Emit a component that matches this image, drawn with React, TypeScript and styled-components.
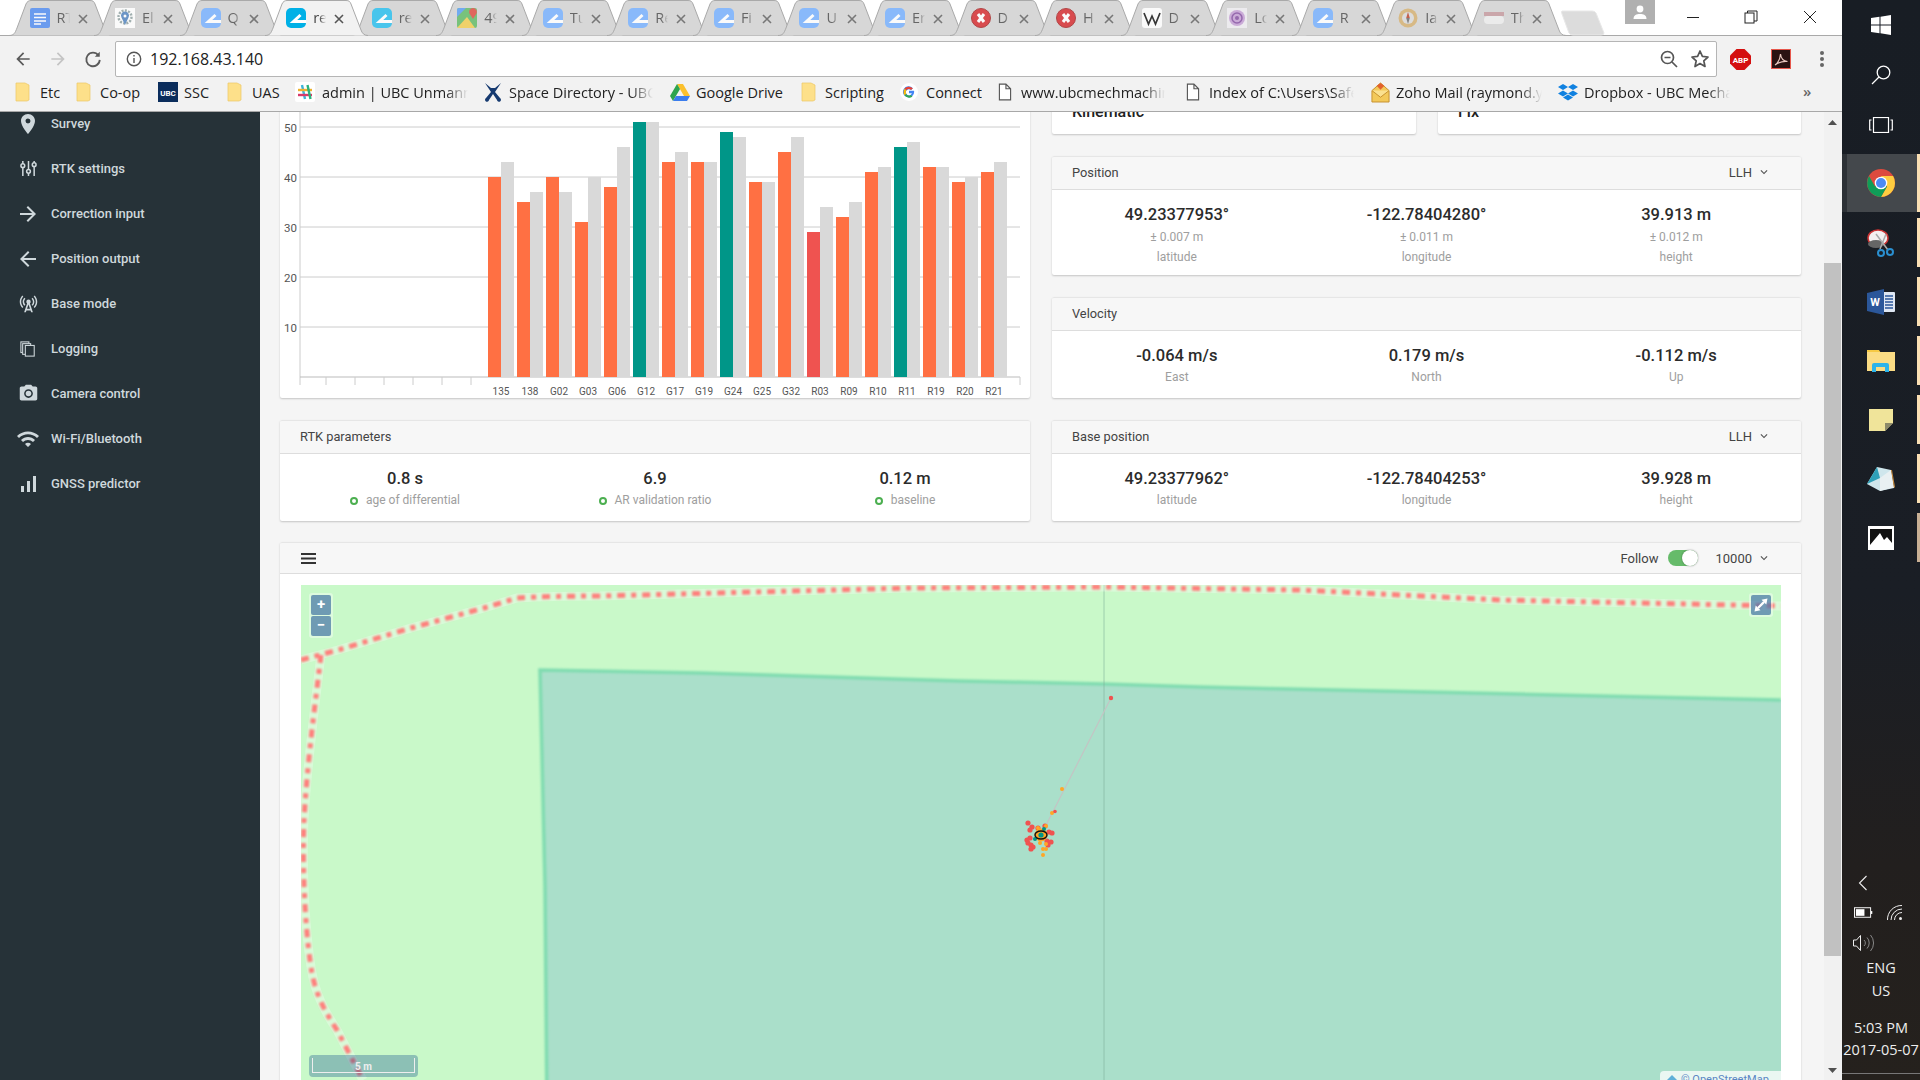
import React from 'react';
import styled, { createGlobalStyle } from 'styled-components';
import { MdPlace, MdArrowForward, MdArrowBack, MdCellTower, MdPhotoCamera, MdWifi, MdSignalCellularAlt, MdKeyboardArrowDown } from 'react-icons/md';

const Global = createGlobalStyle`
  html, body { margin: 0; padding: 0; width: 1920px; height: 1080px; overflow: hidden; background: #fff; }
  * { box-sizing: border-box; }
  #root { width: 1920px; height: 1080px; }
`;

const Screen = styled.div`
  display: flex; width: 1920px; height: 1080px; overflow: hidden;
  font-family: Roboto, "Liberation Sans", sans-serif;
`;
const Browser = styled.div`
  flex: 0 0 1842px; display: flex; flex-direction: column; min-width: 0;
`;

/* ---------- Tab strip ---------- */
const TabStrip = styled.div`
  flex: 0 0 35px; display: flex; align-items: stretch; padding-left: 9.5px; background: #fff; position: relative;
  border-bottom: 1px solid #a9a9a9;
`;
const TabItem = styled.div<{ $active?: boolean }>`
  flex: 0 0 85.55px; position: relative; display: flex; align-items: center; padding-left: 20px; height: 35px;
  z-index: ${(p) => (p.$active ? 2 : 1)};
`;
const TabShape = styled.svg`
  position: absolute; left: -1px; top: 0; width: 106px; height: 36px; overflow: visible;
`;
const TabFav = styled.span<{ $active?: boolean }>`
  position: relative; width: 20px; height: 20px; flex: 0 0 20px; display: block;
  opacity: ${(p) => (p.$active ? 1 : 0.88)};
`;
const TabTitle = styled.span<{ $active?: boolean }>`
  position: relative; width: 13px; margin-left: 7px; overflow: hidden; white-space: nowrap;
  font: 14.5px "Open Sans", sans-serif; color: ${(p) => (p.$active ? '#444' : '#666')};
  -webkit-mask-image: linear-gradient(90deg, #000 50%, transparent);
  mask-image: linear-gradient(90deg, #000 50%, transparent);
`;
const TabClose = styled.svg<{ $active?: boolean }>`
  position: relative; margin-left: 8px; width: 10px; height: 10px; margin-top: 3px; stroke: ${(p) => (p.$active ? '#555' : '#777')}; stroke-width: 1.6; flex: 0 0 10px;
`;
const NewTab = styled.svg`
  position: absolute; left: 1561px; top: 10px; width: 44px; height: 27px;
`;
const Avatar = styled.div`
  position: absolute; left: 1625px; top: 0; width: 30px; height: 24px; background: #b0b0b0;
  display: flex; align-items: center; justify-content: center;
`;
const WinBtn = styled.svg<{ $x: number }>`
  position: absolute; left: ${(p) => p.$x}px; top: 10px; width: 14px; height: 14px; stroke: #222; fill: none; stroke-width: 1;
`;

/* ---------- Toolbar ---------- */
const Toolbar = styled.div`
  flex: 0 0 41px; background: #f2f2f2; display: flex; align-items: flex-start; padding-top: 5px;
`;
const NavIcon = styled.span<{ $w: number }>`
  flex: 0 0 ${(p) => p.$w}px; height: 36px; display: flex; align-items: center; justify-content: center;
`;
const Omnibox = styled.div`
  flex: 0 0 1602px; height: 36px; background: #fff; border: 1px solid #b5b5b5; border-radius: 2px;
  display: flex; align-items: center; padding: 0 6px 0 10px;
`;
const UrlText = styled.span`
  font: 16px "Open Sans", sans-serif; color: #222; margin-left: 8px; flex: 1;
`;
const OmniIcon = styled.svg`
  width: 20px; height: 20px; fill: none; stroke: #555; stroke-width: 1.7;
  & + & { margin-left: 11px; }
`;
const ExtGroup = styled.div`
  display: flex; align-items: center; height: 36px; padding-left: 13px; gap: 20px;
`;

/* ---------- Bookmarks ---------- */
const BookmarkBar = styled.div`
  flex: 0 0 35px; background: #f2f2f2; border-bottom: 1px solid #a8a8a8; display: flex; align-items: center; padding: 0 0 4px 15px; position: relative;
`;
const Bookmark = styled.div<{ $w: number }>`
  flex: 0 0 ${(p) => p.$w}px; display: flex; align-items: center; min-width: 0;
`;
const BookmarkIcon = styled.span<{ $w: number; $gap: number }>`
  flex: 0 0 ${(p) => p.$w}px; margin-right: ${(p) => p.$gap}px; display: flex; height: 20px; align-items: center; justify-content: center;
`;
const BookmarkLabel = styled.span<{ $max: number; $fade?: boolean }>`
  font: 14.5px "Open Sans", sans-serif; color: #222; white-space: nowrap; overflow: hidden; max-width: ${(p) => p.$max}px;
  ${(p) => (p.$fade ? '-webkit-mask-image: linear-gradient(90deg,#000 85%,transparent); mask-image: linear-gradient(90deg,#000 85%,transparent);' : '')}
`;
const Overflow = styled.span`
  position: absolute; left: 1803px; top: 4px; font: 600 15px "Open Sans", sans-serif; color: #666;
`;

/* ---------- App body ---------- */
const Body = styled.div`
  flex: 1; display: flex; min-height: 0; overflow: hidden;
`;
const Sidebar = styled.nav`
  flex: 0 0 260px; background: #263238; overflow: hidden;
`;
const SideList = styled.div`
  margin-top: -11px;
`;
const SideItem = styled.div`
  height: 45px; display: flex; align-items: center; padding-left: 19px; gap: 14px; color: #cfd8dc;
  font: 500 13px Roboto, sans-serif;
`;
const SideIcon = styled.span`
  flex: 0 0 18px; width: 18px; height: 18px; display: flex; align-items: center; justify-content: center; font-size: 24px;
  & > svg { flex: none; }
`;
const Main = styled.main`
  flex: 1; background: #f5f5f5; overflow: hidden; padding: 0 23px 0 20px; min-width: 0;
`;
const Content = styled.div`
  margin-top: -20px; display: flex; flex-direction: column; gap: 21px;
`;
const Columns = styled.div`
  display: grid; grid-template-columns: 750px 749px; column-gap: 22px;
`;
const Column = styled.div`
  display: flex; flex-direction: column; gap: 22px;
`;
const Card = styled.section`
  background: #fff; border-radius: 2px; box-shadow: 0 1px 2px rgba(0,0,0,.2);
`;
const ChartCard = styled(Card)`
  height: 306px; overflow: hidden;
`;
const ChartSvg = styled.svg`
  display: block; width: 750px; height: 306px;
`;
const SmallRow = styled.div`
  display: grid; grid-template-columns: 364px 363px; column-gap: 22px;
`;
const SmallCard = styled(Card)`
  height: 42px; padding: 10px 0 0 20px; font: 500 16px Roboto, sans-serif; color: #212121;
`;
const CardHeader = styled.header`
  height: 34px; background: #f7f7f7; border-bottom: 1px solid #ddd; border-top: 1px solid #e6e6e6; border-radius: 2px 2px 0 0;
  display: flex; align-items: center; justify-content: space-between; padding: 0 30px 1px 20px;
  font: 12.8px Roboto, sans-serif; color: #444;
`;
const Unit = styled.span`
  display: flex; align-items: center; gap: 5px; font: 13px Roboto, sans-serif; color: #444; margin-top: -1px;
`;
const Stats = styled.div`
  display: grid; grid-template-columns: repeat(3, 1fr);
`;
const PosStats = styled(Stats)`
  height: 85px; padding-top: 15px;
`;
const PlainStats = styled(Stats)`
  height: 67px; padding-top: 15px;
`;
const Stat = styled.div`
  display: flex; flex-direction: column; align-items: center; text-align: center;
`;
const Value = styled.div`
  font: 500 16.5px/20px Roboto, sans-serif; color: #2b2b2b; margin-bottom: 4px;
`;
const SubValue = styled.div`
  font: 12px/15px Roboto, sans-serif; color: #9e9e9e; margin: 1px 0 5px;
`;
const Label = styled.div`
  font: 12px/15px Roboto, sans-serif; color: #9e9e9e; display: flex; align-items: center; gap: 8px;
`;
const Dot = styled.span`
  width: 8px; height: 8px; border: 2px solid #4caf50; border-radius: 50%; display: block;
`;
const MapCard = styled(Card)`
  height: 700px;
`;
const MapHeader = styled(CardHeader)`
  height: 32px; padding: 0 30px 0 21px;
`;
const Burger = styled.svg`
  width: 15px; height: 11px; fill: #333;
`;
const MapTools = styled.div`
  display: flex; align-items: center; font: 13px Roboto, sans-serif; color: #444;
`;
const Toggle = styled.span`
  width: 30px; height: 16px; margin: 0 17px 0 10px; border-radius: 8px; background: #66bb6a; position: relative; display: block;
  &::after { content: ""; position: absolute; right: 0; top: 0; width: 16px; height: 16px; border-radius: 50%; background: #fff; box-shadow: 0 0 2px rgba(0,0,0,.4); }
`;
const MapCount = styled.span`
  display: flex; align-items: center; gap: 5px;
`;
const MapWrap = styled.div`
  margin: 11px 20px 0 21px; height: 640px; position: relative; background: #c9f9c9; overflow: hidden;
`;
const MapSvg = styled.svg`
  display: block; width: 1480px; height: 640px;
`;
const ZoomBox = styled.div`
  position: absolute; left: 8px; top: 8px; padding: 2px; background: rgba(255,255,255,.4); border-radius: 3px;
  display: flex; flex-direction: column; gap: 1px;
`;
const MapBtn = styled.div`
  width: 20px; height: 20px; background: rgba(0,60,136,.5); color: #fff; font: 700 15px/19px Roboto, sans-serif; text-align: center; border-radius: 2px;
`;
const FullBox = styled.div`
  position: absolute; left: 1448px; top: 8px; padding: 2px; background: rgba(255,255,255,.4); border-radius: 3px;
`;
const ScaleBar = styled.div`
  position: absolute; left: 8px; top: 470px; width: 109px; height: 22px; background: rgba(0,60,136,.3); border-radius: 4px; padding: 3px;
`;
const ScaleInner = styled.div`
  height: 15px; border: 1px solid #eee; border-top: 0; text-align: center; color: #eee; font: 700 10px/17px Roboto, sans-serif;
`;
const Attribution = styled.div`
  position: absolute; left: 1359px; top: 486px; width: 121px; height: 30px; background: rgba(255,255,255,.75); border-radius: 4px 0 0 0;
  font: 11px/18px Roboto, sans-serif; color: #5b86c4; padding-left: 7px; white-space: nowrap; overflow: hidden;
  display: flex; align-items: flex-start; gap: 4px;
`;
const Scrollbar = styled.div`
  flex: 0 0 18px; background: #f1f1f1; position: relative;
`;
const ScrollThumb = styled.div`
  position: absolute; left: 0; right: 1px; top: 151px; height: 693px; background: #c1c1c1;
`;
const ScrollArrow = styled.svg<{ $top: number }>`
  position: absolute; left: 4px; top: ${(p) => p.$top}px; width: 9px; height: 5px; fill: #505050;
`;

/* ---------- Taskbar ---------- */
const Taskbar = styled.aside`
  flex: 0 0 78px; position: relative; display: flex; flex-direction: column; align-items: stretch; color: #eee;
  background: linear-gradient(180deg, #181d24 0%, #1a1e25 55%, #221f1e 80%, #25211d 100%);
`;
const TaskBtn = styled.div<{ $h: number; $active?: boolean; $lit?: string; $mt?: number }>`
  height: ${(p) => p.$h}px; margin-top: ${(p) => p.$mt ?? 0}px; display: flex; align-items: center; justify-content: center; position: relative;
  ${(p) => (p.$active ? 'background: linear-gradient(90deg,#2d3136 0 5px,#44484c 5px);' : '')}
  ${(p) => (p.$lit ? `&::after { content:""; position:absolute; right:0; top:${p.$active ? 0 : 5}px; bottom:${p.$active ? 0 : 5}px; width:3px; background:${p.$lit}; }` : '')}
`;
const TraySpacer = styled.div`
  flex: 1;
`;
const TrayRow = styled.div<{ $h: number; $pl: number }>`
  height: ${(p) => p.$h}px; display: flex; align-items: center; padding-left: ${(p) => p.$pl}px; gap: 14px;
`;
const TrayText = styled.div<{ $lh: number }>`
  text-align: center; font: 14.5px/${(p) => p.$lh}px "Open Sans", sans-serif; color: #eee; white-space: nowrap;
`;
const TrayBlock = styled.div<{ $mt: number }>`
  margin-top: ${(p) => p.$mt}px;
`;
const TrayLine = styled.div`
  height: 1px; margin: 12px 0 6px; background: #777;
`;

/* ---------- Favicons ---------- */
const EFav = ({ color }: { color: string }) => (
  <svg viewBox="0 0 20 20" width="20" height="20">
    <rect width="20" height="20" rx="5" fill={color} />
    <path d="M20 13.5H7.500L14.500 7" stroke="#fff" strokeWidth="3" fill="none" />
  </svg>
);
const DocFav = () => (
  <svg viewBox="0 0 20 20" width="20" height="20"><rect width="20" height="20" rx="2" fill="#5c93f2" /><path d="M4 6h12M4 9.500h12M4 13h12M4 16h7" stroke="#fff" strokeWidth="1.400" /></svg>
);
const GearFav = () => (
  <svg viewBox="0 0 20 20" width="20" height="20"><rect width="20" height="20" fill="#fff" /><circle cx="10" cy="9" r="6.500" fill="none" stroke="#9aa" strokeWidth="2.400" strokeDasharray="2 1.300" /><path d="M10 17L6.500 9.500a4 4 0 1 1 7 0z" fill="#5d8dc4" /><circle cx="10" cy="8" r="1.500" fill="#fff" /></svg>
);
const MapsFav = () => (
  <svg viewBox="0 0 20 20" width="20" height="20"><rect width="20" height="20" rx="2" fill="#6cc070" /><path d="M0 20L10 9l8 11z" fill="#f4d15c" /><path d="M0 9L9 0H2a2 2 0 0 0-2 2z" fill="#63a4f4" /><path d="M16 0a4 4 0 0 1 3.500 5.500L16 11l-3.500-5.500A4 4 0 0 1 16 0z" fill="#e2574c" /></svg>
);
const ErrFav = () => (
  <svg viewBox="0 0 20 20" width="20" height="20"><circle cx="10" cy="10" r="9.500" fill="#d9383c" stroke="#a33" /><path d="M7 6l6 8M13 6l-6 8" stroke="#fff" strokeWidth="3" /></svg>
);
const WikiFav = () => (
  <svg viewBox="0 0 20 20" width="20" height="20"><rect width="20" height="20" rx="3" fill="#fff" /><path d="M2 5l4.500 11L10 8l3.500 8L18 5" fill="none" stroke="#222" strokeWidth="1.700" /></svg>
);
const SpiralFav = () => (
  <svg viewBox="0 0 20 20" width="20" height="20"><rect width="20" height="20" fill="#f0eef2" /><circle cx="10" cy="10" r="8" fill="#c9a6d8" /><circle cx="10" cy="10" r="5" fill="none" stroke="#8d5aa8" strokeWidth="1.500" /><circle cx="10" cy="10" r="2" fill="#8d5aa8" /></svg>
);
const CompassFav = () => (
  <svg viewBox="0 0 20 20" width="20" height="20"><circle cx="10" cy="10" r="9.500" fill="#d8b67a" /><circle cx="10" cy="10" r="6" fill="#ddd" /><path d="M10 4l1.800 6H8.200z" fill="#c0503a" /><path d="M10 16l-1.800-6h3.600z" fill="#777" /></svg>
);
const TallyFav = () => (
  <svg viewBox="0 0 20 20" width="20" height="20"><rect y="4" width="20" height="4" fill="#c9a0a4" /><rect y="8" width="20" height="8" rx="4" fill="#eee" /></svg>
);

const blue = '#7fb6ff';
const tabs: { fav: React.ReactNode; title: string; active?: boolean }[] = [
  { fav: <DocFav />, title: 'RT' }, { fav: <GearFav />, title: 'El' }, { fav: <EFav color={blue} />, title: 'Q' },
  { fav: <EFav color="#00b0e6" />, title: 're', active: true }, { fav: <EFav color="#35c3f0" />, title: 're' }, { fav: <MapsFav />, title: '49' },
  { fav: <EFav color={blue} />, title: 'Tu' }, { fav: <EFav color={blue} />, title: 'Re' }, { fav: <EFav color={blue} />, title: 'Fi' },
  { fav: <EFav color={blue} />, title: 'U' }, { fav: <EFav color={blue} />, title: 'Er' }, { fav: <ErrFav />, title: 'D' },
  { fav: <ErrFav />, title: 'H' }, { fav: <WikiFav />, title: 'D' }, { fav: <SpiralFav />, title: 'Lo' },
  { fav: <EFav color={blue} />, title: 'R' }, { fav: <CompassFav />, title: 'Ia' }, { fav: <TallyFav />, title: 'Th' },
];

const Folder = () => (
  <svg viewBox="0 0 15 20" width="15" height="20"><path d="M1 1h9l4 2v15l-2 1H1z" fill="#fde08a" stroke="#ecc766" strokeWidth=".7" /></svg>
);
const Page = () => (
  <svg viewBox="0 0 15 20" width="14" height="20"><path d="M1.500 1.500h7l5 5v12h-12zM8.500 1.500v5h5" fill="#fff" stroke="#555" strokeWidth="1.200" /></svg>
);
const bookmarks: { w: number; iw: number; gap: number; icon: React.ReactNode; text: string; max: number; fade?: boolean }[] = [
  { w: 61, iw: 15, gap: 10, icon: <Folder />, text: 'Etc', max: 30 },
  { w: 82, iw: 15, gap: 9, icon: <Folder />, text: 'Co-op', max: 60 },
  { w: 69, iw: 20, gap: 6, icon: <svg viewBox="0 0 20 20" width="20" height="20"><rect width="20" height="20" fill="#0b2d5c" /><text x="10" y="14" fontSize="8" fontWeight="700" textAnchor="middle" fill="#fff" fontFamily="Roboto">UBC</text></svg>, text: 'SSC', max: 40 },
  { w: 68, iw: 15, gap: 10, icon: <Folder />, text: 'UAS', max: 40 },
  { w: 188, iw: 20, gap: 7, icon: <svg viewBox="0 0 20 20" width="20" height="20"><rect width="20" height="20" rx="2" fill="#fff" /><path d="M7 3l3 14" stroke="#3cb4d8" strokeWidth="2.400" /><path d="M3 8h14" stroke="#ecb22e" strokeWidth="2.400" /><path d="M3 13h14" stroke="#d63a6a" strokeWidth="2.400" /><path d="M12.500 3l3 14" stroke="#2ab27b" strokeWidth="2.400" /></svg>, text: 'admin | UBC Unmanned', max: 146, fade: true },
  { w: 187, iw: 20, gap: 6, icon: <svg viewBox="0 0 20 20" width="20" height="20"><path d="M2 1l6 9-5 6a2 2 0 1 0 3 2l4-6 4 6a2 2 0 1 0 3-2l-5-6 6-9-6 5H8z" fill="#163a70" /></svg>, text: 'Space Directory - UBC', max: 144, fade: true },
  { w: 131, iw: 20, gap: 6, icon: <svg viewBox="0 0 20 20" width="20" height="20"><path d="M7 2h6l7 12h-6z" fill="#fbc02d" /><path d="M7 2L0 14l3 5 7-12z" fill="#2da44e" /><path d="M3 19h14l3-5H6z" fill="#3b7ded" /></svg>, text: 'Google Drive', max: 100 },
  { w: 99, iw: 15, gap: 9, icon: <Folder />, text: 'Scripting', max: 70 },
  { w: 98, iw: 17, gap: 8, icon: <svg viewBox="0 0 20 20" width="18" height="18"><circle cx="10" cy="10" r="10" fill="#fff" /><path d="M15.600 8.700H10v2.800h3.200a3.400 3.400 0 1 1-.9-3.600l2-2a6.200 6.200 0 1 0 1.300 2.800z" fill="#4285f4" /><path d="M5 6.500a6.200 6.200 0 0 1 9.300-.6l-2 2A3.400 3.400 0 0 0 7 8z" fill="#ea4335" /><path d="M4 10a6 6 0 0 0 1 3.600l2-1.500a3.400 3.400 0 0 1 0-4L5 6.500A6 6 0 0 0 4 10z" fill="#fbbc05" /><path d="M5 13.600a6.200 6.200 0 0 0 8.900 1.400L12 13.400a3.400 3.400 0 0 1-5-1.300z" fill="#34a853" /></svg>, text: 'Connect', max: 70 },
  { w: 188, iw: 14, gap: 9, icon: <Page />, text: 'www.ubcmechmachineshop', max: 144, fade: true },
  { w: 185, iw: 14, gap: 9, icon: <Page />, text: 'Index of C:\\Users\\Safety', max: 145, fade: true },
  { w: 187, iw: 19, gap: 6, icon: <svg viewBox="0 0 20 22" width="19" height="21"><path d="M1 9l9-8 9 8v12H1z" fill="#f3c95a" stroke="#c58f2c" /><path d="M1 9l9 7 9-7" fill="#fbe18f" stroke="#c58f2c" /><path d="M6 4l4-3 4 3-4 4z" fill="#e2622e" /></svg>, text: 'Zoho Mail (raymond.yang', max: 146, fade: true },
  { w: 190, iw: 20, gap: 6, icon: <svg viewBox="0 0 20 20" width="20" height="20" fill="#1081e0"><path d="M5 2l5 3-5 3-5-3zM15 2l5 3-5 3-5-3zM5 8.500l5 3-5 3-5-3zM15 8.500l5 3-5 3-5-3zM5 15.500l5-3 5 3-5 3z" /></svg>, text: 'Dropbox - UBC Mechatronics', max: 146, fade: true },
];

const Sliders = () => (
  <svg viewBox="0 0 18 18" width="17" height="17" fill="none" stroke="currentColor" strokeWidth="1.600">
    <path d="M3 1v16M9 1v16M15 1v16" />
    <g fill="#263238"><circle cx="3" cy="6" r="2" /><circle cx="9" cy="12" r="2" /><circle cx="15" cy="5" r="2" /></g>
  </svg>
);
const Files = () => (
  <svg viewBox="0 0 18 18" width="16" height="16" fill="#263238" stroke="currentColor" strokeWidth="1.200">
    <rect x="1" y="1" width="9" height="12" /><rect x="3" y="3" width="9" height="12" /><rect x="6" y="5" width="10" height="12" />
  </svg>
);
const sideItems: { icon: React.ReactNode; text: string }[] = [
  { icon: <MdPlace />, text: 'Survey' },
  { icon: <Sliders />, text: 'RTK settings' },
  { icon: <MdArrowForward />, text: 'Correction input' },
  { icon: <MdArrowBack />, text: 'Position output' },
  { icon: <MdCellTower size={21} />, text: 'Base mode' },
  { icon: <Files />, text: 'Logging' },
  { icon: <MdPhotoCamera size={21} />, text: 'Camera control' },
  { icon: <MdWifi />, text: 'Wi-Fi/Bluetooth' },
  { icon: <MdSignalCellularAlt />, text: 'GNSS predictor' },
];

const sats: [string, number, number, string][] = [
  ['135', 40, 43, '#ff7043'], ['138', 35, 37, '#ff7043'], ['G02', 40, 37, '#ff7043'], ['G03', 31, 40, '#ff7043'],
  ['G06', 38, 46, '#ff7043'], ['G12', 51, 51, '#009688'], ['G17', 43, 45, '#ff7043'], ['G19', 43, 43, '#ff7043'],
  ['G24', 49, 48, '#009688'], ['G25', 39, 39, '#ff7043'], ['G32', 45, 48, '#ff7043'], ['R03', 29, 34, '#ef5350'],
  ['R09', 32, 35, '#ff7043'], ['R10', 41, 42, '#ff7043'], ['R11', 46, 47, '#009688'], ['R19', 42, 42, '#ff7043'],
  ['R20', 39, 40, '#ff7043'], ['R21', 41, 43, '#ff7043'],
];

const Chart = () => {
  const base = 285; // y of 0 in card coordinates (card top = 92)
  const left = 20;
  const right = 740;
  const start = 208;
  const step = 29;
  return (
    <ChartSvg viewBox="0 0 750 306">
      {[50, 40, 30, 20, 10].map((v) => (
        <g key={v}>
          <line x1={left} x2={right} y1={base - v * 5} y2={base - v * 5} stroke="#ccc" />
          <text x={left - 3} y={base - v * 5 + 4.5} textAnchor="end" fontSize="11.500" fontFamily="Roboto" fill="#555">{v}</text>
        </g>
      ))}
      <line x1={left} x2={left} y1={0} y2={base + 8} stroke="#ccc" />
      <line x1={left} x2={right} y1={base} y2={base} stroke="#bbb" />
      <line x1={right} x2={right} y1={base} y2={base + 8} stroke="#ccc" />
      {[46, 75, 104, 133, 162, 191].map((x) => (
        <line key={x} x1={x} x2={x} y1={base} y2={base + 8} stroke="#ccc" />
      ))}
      {sats.map(([name, a, b, c], i) => {
        const x = start + i * step;
        return (
          <g key={name}>
            <rect x={x} y={base - a * 5} width={13} height={a * 5} fill={c} />
            <rect x={x + 13} y={base - b * 5} width={13} height={b * 5} fill="#d9d9d9" />
            <text x={x + 13} y={base + 18} textAnchor="middle" fontSize="10" fontFamily="Roboto" fill="#555">{name}</text>
          </g>
        );
      })}
    </ChartSvg>
  );
};

const reds: [number, number][] = [
  [1028, 823], [1032, 827], [1030, 830], [1049, 832], [1052, 833], [1030, 838], [1027, 840], [1028, 843], [1031, 845], [1033, 847], [1031, 849],
  [1047, 841], [1051, 842], [1048, 845], [1045, 826], [1038, 828],
];
const oranges: [number, number][] = [[1038, 828], [1046, 826], [1040, 843], [1046, 844], [1043, 849], [1046, 849], [1043, 855]];

const TRACK = 'M0 75 L37 65 L110 43 L183 23 L216 13 Q250 11 299 11 L415 8 L609 3 L803 2 L999 5 L1199 15 L1480 21';
const TRACK2 = 'M20 70 C14 120 6 180 3 235 C1 280 4 340 9 375 C12 400 18 418 36 445 L62 495';

const MapView = () => (
  <MapWrap>
    <MapSvg viewBox="0 0 1480 640">
      <defs>
        <filter id="soft" x="-5%" y="-5%" width="110%" height="110%"><feGaussianBlur stdDeviation="0.9" /></filter>
      </defs>
      <path d="M239 85 L400 88 L659 96 L803 99 L899 102 L1480 115 L1480 640 L247 640 L244 300 Z" fill="#aadfca" />
      <path d="M247 640 L244 300 L239 85 L400 88 L659 96 L803 99 L899 102 L1480 115" fill="none" stroke="#80dcb0" strokeWidth="3.500" filter="url(#soft)" />
      <line x1="803" x2="803" y1="0" y2="640" stroke="#7fb09a" strokeOpacity=".6" />
      <g fill="none">
        <path d={TRACK} stroke="#fff" strokeOpacity=".3" strokeWidth="9" />
        <path d={TRACK2} stroke="#fff" strokeOpacity=".3" strokeWidth="9" />
        <g filter="url(#soft)">
          <path d={TRACK} stroke="#ff7f7c" strokeWidth="5" strokeDasharray="8 6 5 6" />
          <path d={TRACK2} stroke="#ff7f7c" strokeWidth="5" strokeDasharray="8 6 5 6" />
        </g>
      </g>
      <g transform="translate(-301 -585)">
        <line x1="1111" y1="698" x2="1041" y2="835" stroke="#c4c4c4" strokeWidth="1.200" />
        {reds.map(([x, y], i) => <circle key={i} cx={x} cy={y} r="2.600" fill="#ef5350" />)}
        {oranges.map(([x, y], i) => <circle key={i} cx={x} cy={y} r="2" fill="#ffa726" />)}
        <circle cx="1111" cy="698" r="2.200" fill="#ef5350" />
        <circle cx="1062" cy="789" r="2" fill="#ffa726" />
        <circle cx="1052" cy="813" r="2" fill="#ffa726" />
        <circle cx="1055" cy="811.500" r="1.800" fill="#ef5350" />
        <circle cx="1041" cy="835" r="6.500" fill="#ffa726" />
        <circle cx="1044" cy="829" r="2" fill="#009688" />
        <circle cx="1035" cy="839" r="2" fill="#009688" />
        <circle cx="1041" cy="835" r="2.600" fill="#009688" />
        <ellipse cx="1041" cy="835" rx="6" ry="4" fill="none" stroke="#111" strokeWidth="1.400" />
      </g>
    </MapSvg>
    <ZoomBox><MapBtn>+</MapBtn><MapBtn>−</MapBtn></ZoomBox>
    <FullBox>
      <MapBtn>
        <svg viewBox="0 0 20 20" width="20" height="20" fill="#fff"><path d="M3.500 16.500l1.200-6 4.800 4.800zM16.500 3.500l-1.200 6-4.800-4.800z" /><path d="M7 13l6-6" stroke="#fff" strokeWidth="2.400" /></svg>
      </MapBtn>
    </FullBox>
    <ScaleBar><ScaleInner>5 m</ScaleInner></ScaleBar>
    <Attribution>
      <svg viewBox="0 0 10 10" width="10" height="10" style={{ marginTop: 4, flex: 'none' }}><path d="M5 0l5 5-5 5-5-5z" fill="#5fb0d8" /></svg>
      © OpenStreetMap
    </Attribution>
  </MapWrap>
);

const Chevron = () => <MdKeyboardArrowDown size={14} color="#555" />;

const StatCol = ({ value, sub, label, dot }: { value: string; sub?: string; label: string; dot?: boolean }) => (
  <Stat>
    <Value>{value}</Value>
    {sub && <SubValue>{sub}</SubValue>}
    <Label>{dot && <Dot />}{label}</Label>
  </Stat>
);

export default function App() {
  return (
    <Screen>
      <Global />
      <Browser>
        <TabStrip>
          {tabs.map((t, i) => (
            <TabItem key={i} $active={t.active}>
              <TabShape viewBox="0 0 106 36">
                <path d="M0 35.500C5 35.500 6 33 8 28L17 4C18 1.500 20 .5 22 .5L81 .5C84 .5 85 1.500 86 4L96 30C97 33 99 35.500 103 35.500" fill={t.active ? '#f2f2f2' : '#d7d7d7'} stroke="#a9a9a9" />
              </TabShape>
              <TabFav $active={t.active}>{t.fav}</TabFav>
              <TabTitle $active={t.active}>{t.title}</TabTitle>
              <TabClose $active={t.active} viewBox="0 0 10 10"><path d="M1 1l8 8M9 1l-8 8" /></TabClose>
            </TabItem>
          ))}
          <NewTab viewBox="0 0 44 27"><path d="M1 1h30q3 0 4 2l8 20q0 2-3 2H12q-3 0-4-2L1 4q-1-3 0-3z" fill="#dcdcdc" stroke="#e8e8e8" /></NewTab>
          <Avatar>
            <svg viewBox="0 0 16 16" width="16" height="16" fill="#fff"><circle cx="8" cy="5" r="3.400" /><path d="M1.500 15c0-4 3-5 6.500-5s6.500 1 6.500 5z" /></svg>
          </Avatar>
          <WinBtn $x={1686} viewBox="0 0 14 14"><path d="M1 7.500h12" /></WinBtn>
          <WinBtn $x={1744} viewBox="0 0 14 14"><rect x="1" y="3" width="9" height="10" /><path d="M3.500 3V1H13v10h-3" /></WinBtn>
          <WinBtn $x={1803} viewBox="0 0 14 14"><path d="M1 1l12 12M13 1L1 13" /></WinBtn>
        </TabStrip>
        <Toolbar>
          <NavIcon $w={46}><MdArrowBack size={20} color="#5a5a5a" /></NavIcon>
          <NavIcon $w={24}><MdArrowForward size={20} color="#c4c4c4" /></NavIcon>
          <NavIcon $w={45}>
            <svg viewBox="0 0 20 20" width="18" height="18" fill="none" stroke="#5a5a5a" strokeWidth="2"><path d="M16 6a7.500 7.500 0 1 0 1.500 5" /><path d="M17.500 2v5.500H12" fill="#5a5a5a" stroke="none" /></svg>
          </NavIcon>
          <Omnibox>
            <svg viewBox="0 0 16 16" width="16" height="16" fill="none" stroke="#555" strokeWidth="1.400"><circle cx="8" cy="8" r="6.700" /><path d="M8 7v5M8 4v1.600" /></svg>
            <UrlText>192.168.43.140</UrlText>
            <OmniIcon viewBox="0 0 20 20"><circle cx="8.500" cy="8.500" r="6" /><path d="M5.500 8.500h6M13 13l5 5" /></OmniIcon>
            <OmniIcon viewBox="0 0 20 20"><path d="M10 2l2.400 5.400 5.600.6-4.200 3.800 1.200 5.700-5-3-5 3 1.200-5.700L2 8l5.600-.6z" strokeLinejoin="round" /></OmniIcon>
          </Omnibox>
          <ExtGroup>
            <svg viewBox="0 0 21 21" width="21" height="21"><path d="M6.500 0h8L21 6.500v8L14.500 21h-8L0 14.500v-8z" fill="#d40f0f" /><text x="10.500" y="14" textAnchor="middle" fontSize="8" fontWeight="700" fontFamily="Roboto" fill="#fff">ABP</text></svg>
            <svg viewBox="0 0 20 20" width="20" height="20"><rect x=".5" y=".5" width="19" height="19" fill="#2a1212" stroke="#e7574c" /><path d="M4 16c3-2 5-6 5.500-11 .5 5 3 7 7 7.500-5-.5-9 1-12.500 3.500z" fill="none" stroke="#e8c8c0" strokeWidth="1.200" /></svg>
            <svg viewBox="0 0 6 20" width="6" height="20" fill="#666" style={{ marginLeft: 8 }}><circle cx="3" cy="4" r="2" /><circle cx="3" cy="10" r="2" /><circle cx="3" cy="16" r="2" /></svg>
          </ExtGroup>
        </Toolbar>
        <BookmarkBar>
          {bookmarks.map((b) => (
            <Bookmark key={b.text} $w={b.w}>
              <BookmarkIcon $w={b.iw} $gap={b.gap}>{b.icon}</BookmarkIcon>
              <BookmarkLabel $max={b.max} $fade={b.fade}>{b.text}</BookmarkLabel>
            </Bookmark>
          ))}
          <Overflow>»</Overflow>
        </BookmarkBar>
        <Body>
          <Sidebar>
            <SideList>
              {sideItems.map((s) => (
                <SideItem key={s.text}><SideIcon>{s.icon}</SideIcon>{s.text}</SideItem>
              ))}
            </SideList>
          </Sidebar>
          <Main>
            <Content>
              <Columns>
                <Column>
                  <ChartCard><Chart /></ChartCard>
                  <Card>
                    <CardHeader>RTK parameters</CardHeader>
                    <PlainStats>
                      <StatCol value="0.8 s" label="age of differential" dot />
                      <StatCol value="6.9" label="AR validation ratio" dot />
                      <StatCol value="0.12 m" label="baseline" dot />
                    </PlainStats>
                  </Card>
                </Column>
                <Column>
                  <SmallRow>
                    <SmallCard>Kinematic</SmallCard>
                    <SmallCard>Fix</SmallCard>
                  </SmallRow>
                  <Card>
                    <CardHeader>Position<Unit>LLH <Chevron /></Unit></CardHeader>
                    <PosStats>
                      <StatCol value="49.23377953°" sub="± 0.007 m" label="latitude" />
                      <StatCol value="-122.78404280°" sub="± 0.011 m" label="longitude" />
                      <StatCol value="39.913 m" sub="± 0.012 m" label="height" />
                    </PosStats>
                  </Card>
                  <Card>
                    <CardHeader>Velocity</CardHeader>
                    <PlainStats>
                      <StatCol value="-0.064 m/s" label="East" />
                      <StatCol value="0.179 m/s" label="North" />
                      <StatCol value="-0.112 m/s" label="Up" />
                    </PlainStats>
                  </Card>
                  <Card>
                    <CardHeader>Base position<Unit>LLH <Chevron /></Unit></CardHeader>
                    <PlainStats>
                      <StatCol value="49.23377962°" label="latitude" />
                      <StatCol value="-122.78404253°" label="longitude" />
                      <StatCol value="39.928 m" label="height" />
                    </PlainStats>
                  </Card>
                </Column>
              </Columns>
              <MapCard>
                <MapHeader>
                  <Burger viewBox="0 0 15 11"><rect width="15" height="2" /><rect y="4.500" width="15" height="2" /><rect y="9" width="15" height="2" /></Burger>
                  <MapTools>
                    Follow<Toggle /><MapCount>10000 <Chevron /></MapCount>
                  </MapTools>
                </MapHeader>
                <MapView />
              </MapCard>
            </Content>
          </Main>
          <Scrollbar>
            <ScrollArrow $top={8} viewBox="0 0 9 5"><path d="M4.500 0L9 5H0z" /></ScrollArrow>
            <ScrollThumb />
            <ScrollArrow $top={956} viewBox="0 0 9 5"><path d="M0 0h9L4.500 5z" /></ScrollArrow>
          </Scrollbar>
        </Body>
      </Browser>
      <Taskbar>
        <TaskBtn $h={50}>
          <svg viewBox="0 0 20 20" width="20" height="20" fill="#fff"><path d="M0 3l8.500-1.200v7.700H0zM9.500 1.700L20 0v9.500H9.500zM0 10.500h8.500v7.700L0 17zM9.500 10.500H20V20L9.500 18.300z" /></svg>
        </TaskBtn>
        <TaskBtn $h={50}>
          <svg viewBox="0 0 20 20" width="20" height="20" fill="none" stroke="#fff" strokeWidth="1.300"><circle cx="12.500" cy="7.500" r="6.300" /><path d="M8 12l-7 7" /></svg>
        </TaskBtn>
        <TaskBtn $h={50}>
          <svg viewBox="0 0 24 16" width="24" height="16" fill="none" stroke="#fff" strokeWidth="1.200"><rect x="4.500" y=".5" width="15" height="15" /><path d="M2.500 3H.7v10h1.800M21.500 3h1.800v10h-1.800" /></svg>
        </TaskBtn>
        <TaskBtn $h={58} $mt={4} $active $lit="#fbe0b4">
          <svg viewBox="0 0 28 28" width="28" height="28">
            <circle cx="14" cy="14" r="14" fill="#dd4b3e" />
            <path d="M14 28a14 14 0 0 0 12.100-21H14l6 10.500z" fill="#ffcd40" />
            <path d="M14 28L20 17.500 14 14 8 17.500 2 7a14 14 0 0 0 12 21z" fill="#0f9d58" />
            <circle cx="14" cy="14" r="6.300" fill="#fff" /><circle cx="14" cy="14" r="5" fill="#4c8bf5" />
          </svg>
        </TaskBtn>
        <TaskBtn $h={59} $mt={1} $lit="#fbe0b4">
          <svg viewBox="0 0 28 28" width="28" height="28"><ellipse cx="11" cy="9" rx="10" ry="8" fill="#f4f0f0" stroke="#c33" strokeWidth="1.500" /><ellipse cx="9" cy="15" rx="8" ry="4" fill="#666" /><path d="M9 5l12 16M19 5L13 20" stroke="#aaa" strokeWidth="1.500" /><circle cx="23" cy="23" r="3" fill="none" stroke="#2a8fd0" strokeWidth="2" /><circle cx="14" cy="24" r="3" fill="none" stroke="#2a8fd0" strokeWidth="2" /></svg>
        </TaskBtn>
        <TaskBtn $h={59} $lit="#fbe0b4">
          <svg viewBox="0 0 28 26" width="28" height="26"><rect x="9" y="3" width="19" height="20" rx="1" fill="#dfe7f3" /><path d="M18 7h8M18 10h8M18 13h8M18 16h8M18 19h8" stroke="#2b579a" strokeWidth="1.500" /><path d="M0 4l17-4v26L0 22z" fill="#2b579a" /><text x="8" y="17" fontSize="11" fontWeight="700" textAnchor="middle" fontFamily="Roboto" fill="#fff">W</text></svg>
        </TaskBtn>
        <TaskBtn $h={59} $lit="#fbe0b4">
          <svg viewBox="0 0 28 22" width="28" height="22"><path d="M0 0h12l2 3H0z" fill="#f6c945" /><rect y="2" width="28" height="19" fill="#fbdc84" /><path d="M5 22v-7a2 2 0 0 1 2-2h13a2 2 0 0 1 2 2v7h-4v-5H9v5z" fill="#2db4ea" /></svg>
        </TaskBtn>
        <TaskBtn $h={59} $lit="#fbe0b4">
          <svg viewBox="0 0 24 22" width="24" height="22"><path d="M0 0h24v14l-8 8H0z" fill="#f0e49a" /><path d="M24 14h-8v8z" fill="#8d8a6a" /></svg>
        </TaskBtn>
        <TaskBtn $h={59} $lit="#fbe0b4">
          <svg viewBox="0 0 28 26" width="28" height="26"><path d="M10 1l14 3 3 18-14 3L0 18z" fill="#cfe6ec" /><path d="M0 18L10 1l3 11z" fill="#2fa0b8" /><path d="M13 25l11-3h3L24 4l-11 8z" fill="#e9f0f2" /><path d="M24 4l3 18 1-1-3-17z" fill="#c88a3c" /></svg>
        </TaskBtn>
        <TaskBtn $h={59} $lit="#c9b095">
          <svg viewBox="0 0 26 24" width="26" height="24"><rect width="26" height="24" fill="#fff" /><path d="M2 3h22v14l-5-6-3 3-4-7L2 19z" fill="#111" /></svg>
        </TaskBtn>
        <TraySpacer />
        <TrayRow $h={18} $pl={16}><svg viewBox="0 0 10 16" width="10" height="16" fill="none" stroke="#eee" strokeWidth="1.100"><path d="M8.500 1l-7 7 7 7" /></svg></TrayRow>
        <TrayRow $h={40} $pl={12}>
          <svg viewBox="0 0 20 11" width="19" height="11" fill="none" stroke="#fff"><rect x=".5" y=".5" width="17" height="10" /><rect x="2" y="2" width="9" height="7" fill="#fff" stroke="none" /><path d="M18.500 4v3" strokeWidth="1.500" /></svg>
          <svg viewBox="0 0 16 15" width="16" height="15" fill="none" stroke="#eee" strokeWidth="1"><path d="M.5 15A14 14 0 0 1 15 .5M4 15A11 11 0 0 1 15 4M7.500 15A7.500 7.500 0 0 1 15 7.500" /><circle cx="13.500" cy="13.500" r="1.500" fill="#eee" stroke="none" /></svg>
        </TrayRow>
        <TrayRow $h={21} $pl={11}>
          <svg viewBox="0 0 21 18" width="21" height="18" fill="none" stroke="#eee" strokeWidth="1"><path d="M.5 6h3l4-4.500v15l-4-4.500h-3z" /><path d="M11 6a4 4 0 0 1 0 6M14 3.500a8 8 0 0 1 0 11M17.500 1a12 12 0 0 1 0 16" stroke="#888" /></svg>
        </TrayRow>
        <TrayBlock $mt={3}>
          <TrayText $lh={23}>ENG</TrayText>
          <TrayText $lh={23}>US</TrayText>
        </TrayBlock>
        <TrayBlock $mt={15}>
          <TrayText $lh={22}>5:03 PM</TrayText>
          <TrayText $lh={22}>2017-05-07</TrayText>
        </TrayBlock>
        <TrayLine />
      </Taskbar>
    </Screen>
  );
}
